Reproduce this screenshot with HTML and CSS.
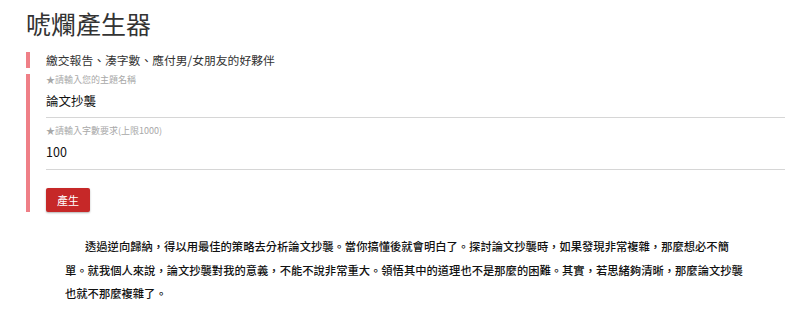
FILE: index.html
```html
<!DOCTYPE html>
<html lang="zh-Hant">
<head>
<meta charset="utf-8">
<title>唬爛產生器</title>
<link rel="stylesheet" href="styles.css">
</head>
<body>
<div class="page">
  <h1 class="title">唬爛產生器</h1>
  <div class="quote">繳交報告、湊字數、應付男/女朋友的好夥伴</div>
  <form class="form">
    <div class="field first">
      <label class="label" for="topic">★請輸入您的主題名稱</label>
      <input class="input" id="topic" type="text" value="論文抄襲">
    </div>
    <div class="field">
      <label class="label" for="count">★請輸入字數要求(上限1000)</label>
      <input class="input" id="count" type="text" value="100">
    </div>
    <button class="btn" type="button">產生</button>
  </form>
  <p class="result">透過逆向歸納，得以用最佳的策略去分析論文抄襲。當你搞懂後就會明白了。探討論文抄襲時，如果發現非常複雜，那麼想必不簡單。就我個人來說，論文抄襲對我的意義，不能不說非常重大。領悟其中的道理也不是那麼的困難。其實，若思緒夠清晰，那麼論文抄襲也就不那麼複雜了。</p>
</div>
</body>
</html>
```
FILE: styles.css
```css
html, body {
  margin: 0;
  padding: 0;
  background: #fff;
}
body {
  font-family: "Noto Sans CJK TC", "Noto Sans", sans-serif;
  color: #222;
}
.page {
  padding: 0 15px 0 26px;
}
.title {
  margin: 8px 0 0 0;
  font-size: 25px;
  line-height: 30px;
  font-weight: 400;
  color: #333;
}
.quote {
  margin-top: 14px;
  border-left: 4px solid #ef7f87;
  padding-left: 16px;
  font-size: 11.8px;
  line-height: 16px;
  color: #333;
}
.form {
  margin: 15px 0 0 0;
  border-left: 4px solid #ef7f87;
  padding-left: 16px;
}
.field {
  display: flex;
  flex-direction: column;
  border-bottom: 1px solid #d6d6d6;
  padding-bottom: 6px;
  margin-top: 7px;
}
.field.first {
  margin-top: -9px;
}
.label {
  font-size: 9px;
  line-height: 12px;
  color: #a8a8a8;
}
.input {
  margin-top: 5px;
  border: 0;
  padding: 0;
  outline: none;
  background: transparent;
  font-family: "Noto Sans CJK TC", "Noto Sans", sans-serif;
  font-size: 12.5px;
  line-height: 20px;
  height: 20px;
  color: #111;
  width: 100%;
}
.field + .field {
  padding-bottom: 7px;
}
.btn {
  display: block;
  margin-top: 18px;
  width: 44px;
  height: 24px;
  padding: 0;
  border: 0;
  border-radius: 2px;
  background: #c62828;
  color: #fff;
  font-family: "Noto Sans CJK TC", "Noto Sans", sans-serif;
  font-size: 11px;
  box-shadow: 0 1px 2px rgba(0, 0, 0, 0.3);
}
.result {
  margin: 23px 0 0 39px;
  width: 684px;
  font-size: 11.3px;
  line-height: 23.5px;
  font-weight: 500;
  text-indent: 20px;
  color: #111;
}
```
